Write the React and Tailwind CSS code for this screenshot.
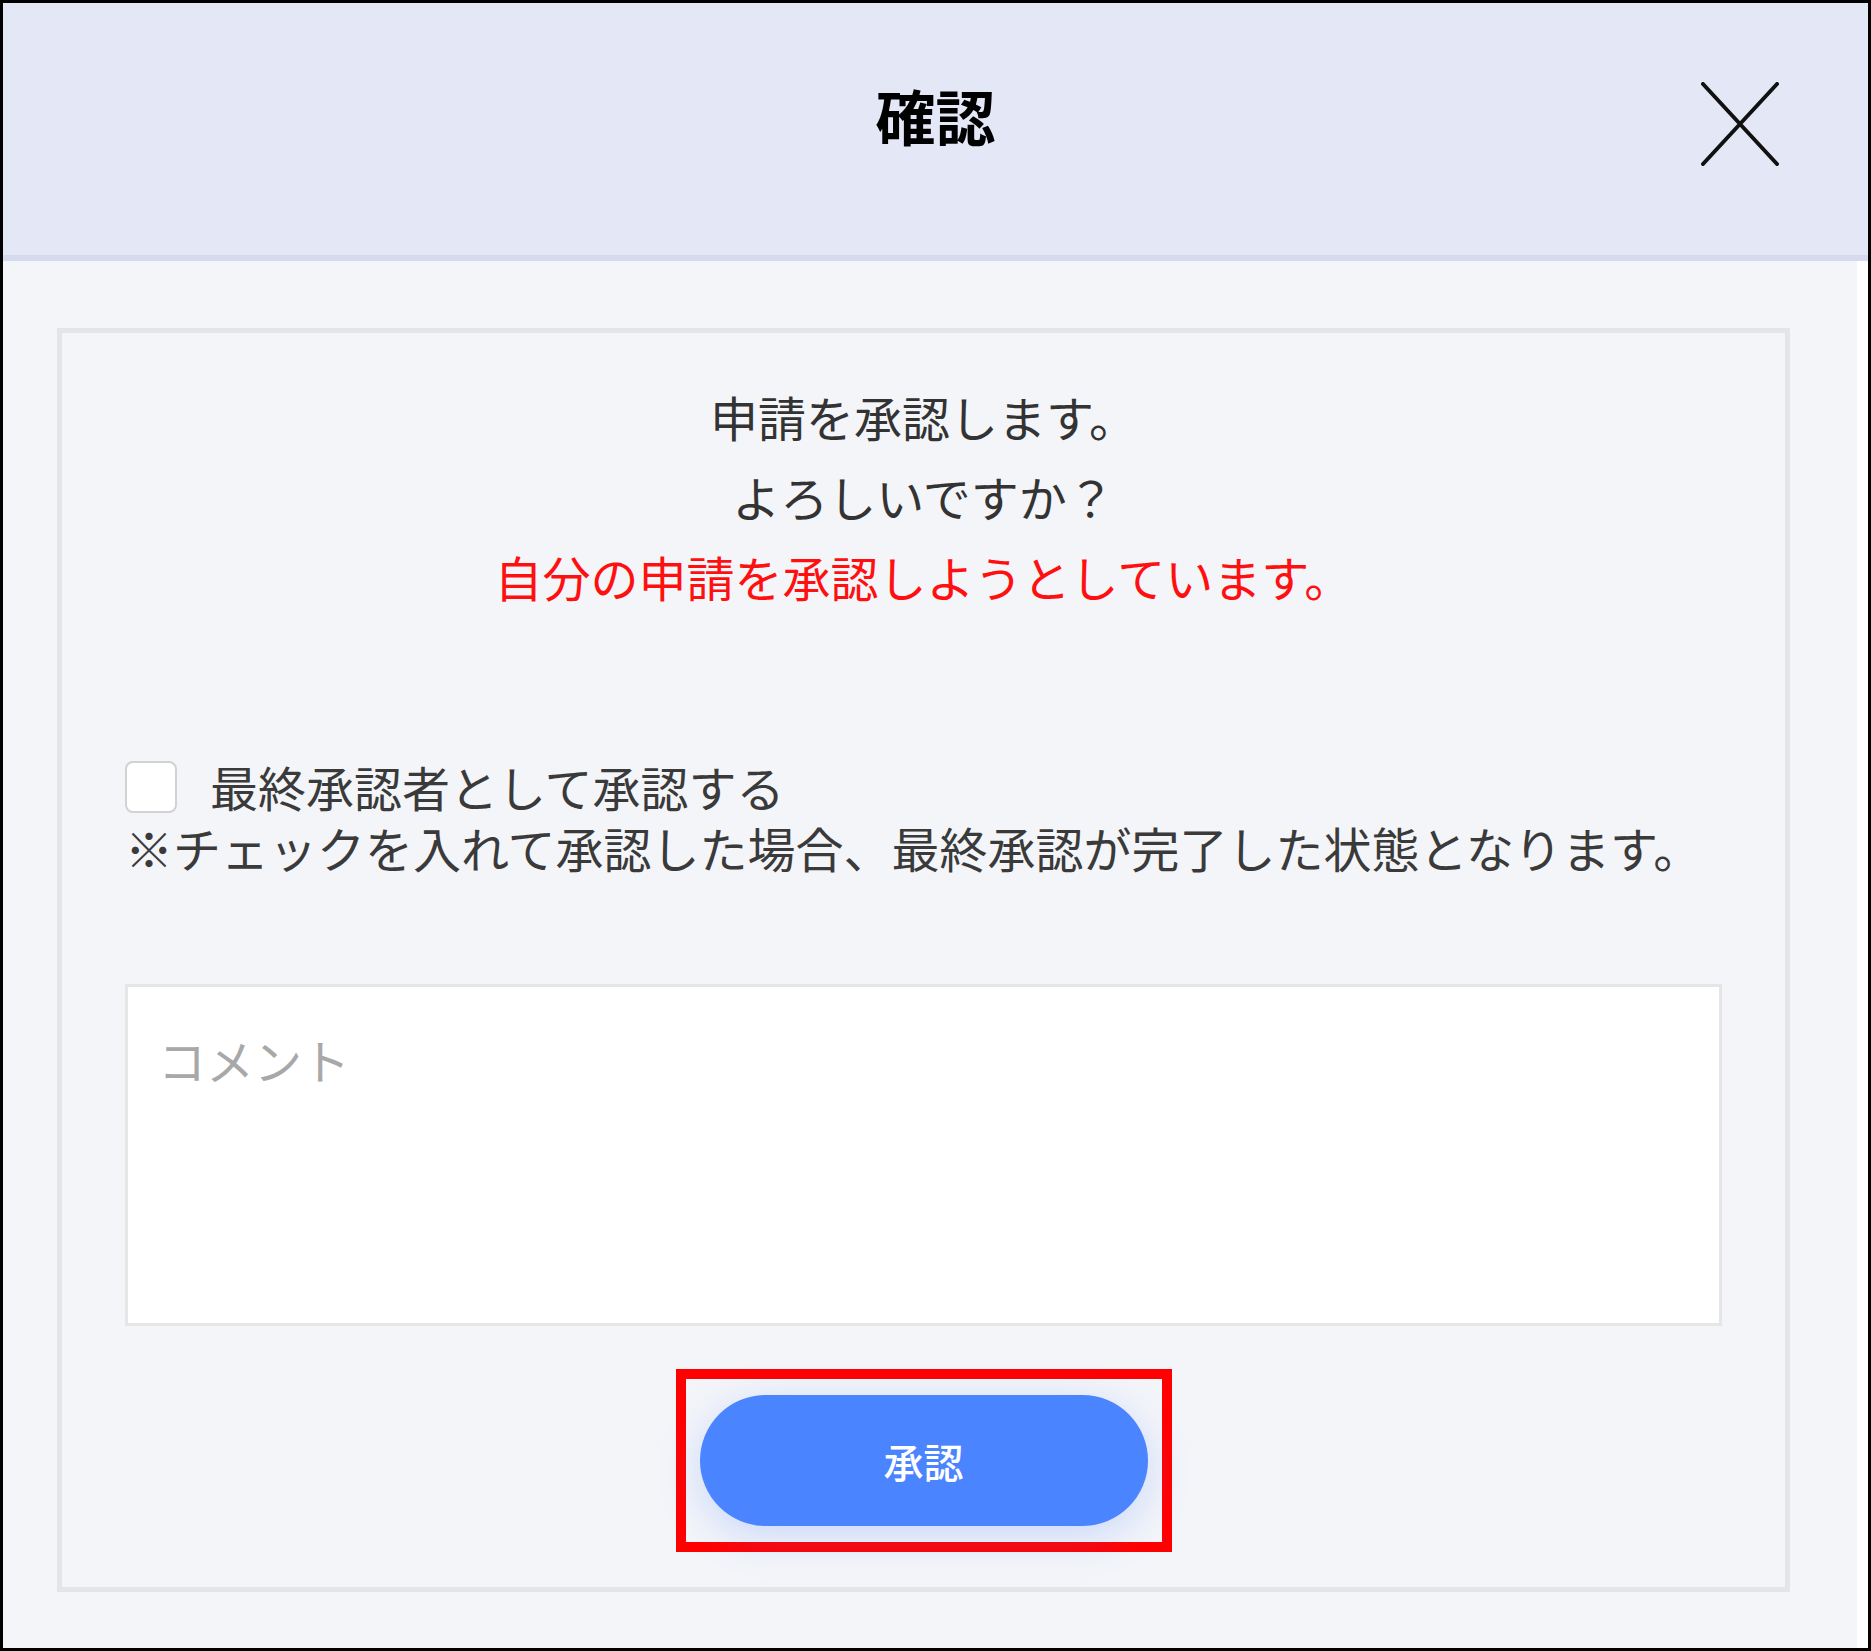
import React from "react";

const CloseIcon = () => (
  <svg width="78" height="84" viewBox="0 0 78 84" fill="none">
    <path d="M2 2 L76 82 M76 2 L2 82" stroke="#111" strokeWidth="4" strokeLinecap="round" />
  </svg>
);

const App = () => {
  return (
    <div
      className="w-[1871px] h-[1651px] border-[3px] border-black flex flex-col bg-[#f4f5f9]"
      style={{ fontFamily: '"Noto Sans CJK JP", "Noto Sans", sans-serif' }}
    >
      {/* header */}
      <div className="h-[258px] shrink-0 bg-[#e4e8f6] border-b-[6px] border-[#d6daef] grid grid-cols-[1fr_auto_1fr] items-center pb-[20px]">
        <div />
        <h1 className="text-[60px] font-bold leading-none text-black mb-[8px]">確認</h1>
        <button className="justify-self-end mr-[89px] mt-[10px]">
          <CloseIcon />
        </button>
      </div>

      {/* body */}
      <div className="flex-1 flex">
        <div className="flex-1 pl-[54px] pr-[67px] pt-[67px]">
          <div className="border-[5px] border-[#e5e5e8] px-[63px] pt-[43px] pb-[35px] flex flex-col">
            <div className="text-center text-[48px] leading-[80px] text-[#333]">
              <p>申請を承認します。</p>
              <p>よろしいですか？</p>
              <p className="text-[#ff1010]">自分の申請を承認しようとしています。</p>
            </div>

            {/* final approver */}
            <div className="mt-[140px] text-[48px] leading-[61px] text-[#3a3a3a]">
              <label className="flex items-center gap-[33px]">
                <span className="w-[52px] h-[52px] rounded-[8px] border-2 border-[#d2d2d2] bg-white" />
                <span>最終承認者として承認する</span>
              </label>
              <p>※チェックを入れて承認した場合、最終承認が完了した状態となります。</p>
            </div>

            <textarea
              placeholder="コメント"
              className="mt-[106px] h-[342px] w-full resize-none border-[3px] border-[#e6e6e6] bg-white px-[30px] pt-[42px] text-[48px] leading-[60px] text-[#333] placeholder:text-[#a8a8a8] outline-none"
            />

            <div className="mt-[43px] self-center border-[10px] border-[#ff0000] px-[14px] py-[16px]">
              <button className="w-[448px] h-[131px] rounded-full bg-[#4a84ff] text-white text-[40px] font-medium shadow-[0_10px_40px_rgba(74,132,255,0.25)]">
                承認
              </button>
            </div>
          </div>
        </div>
        <div className="w-[11px] bg-white" />
      </div>
    </div>
  );
};

export default App;
